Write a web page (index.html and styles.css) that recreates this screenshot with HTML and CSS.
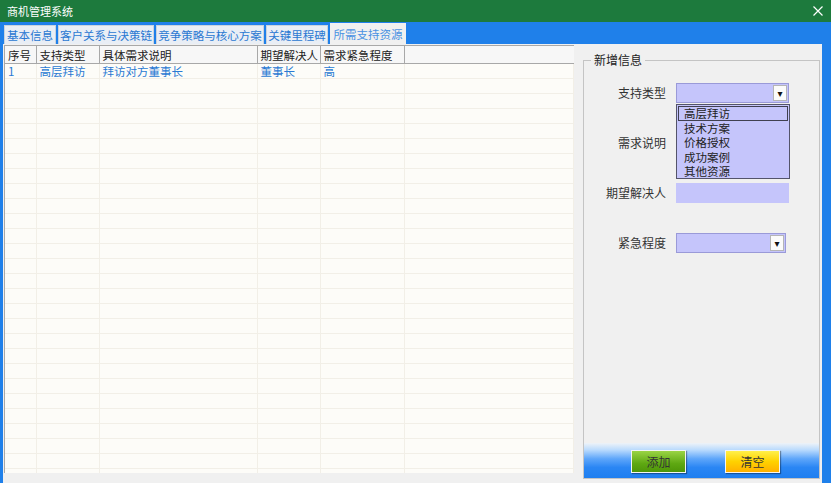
FILE: index.html
```html
<!DOCTYPE html>
<html lang="zh-CN">
<head>
    <meta charset="UTF-8">
    <title>商机管理系统</title>
    <link rel="stylesheet" href="styles.css">
</head>
<body>

    <div class="window">
        <div class="titlebar">
            <span class="title">商机管理系统</span>
            <svg class="close" width="10" height="10" viewBox="0 0 10 10">
                <path d="M0.5 0.5 L9.5 9.5 M9.5 0.5 L0.5 9.5" stroke="white" stroke-width="1.2" fill="none"/>
            </svg>
        </div>

        <div class="frame">
            <div class="tabs">
                <div class="tab w1">基本信息</div>
                <div class="tab w2">客户关系与决策链</div>
                <div class="tab w3">竞争策略与核心方案</div>
                <div class="tab w4">关键里程碑</div>
                <div class="tab w5 active">所需支持资源</div>
            </div>

            <div class="page">
                <div class="grid">
                    <table>
                        <colgroup>
                            <col style="width:31px">
                            <col style="width:63px">
                            <col style="width:158px">
                            <col style="width:63px">
                            <col style="width:84px">
                            <col>
                        </colgroup>
                        <thead>
                            <tr><th>序号</th><th>支持类型</th><th>具体需求说明</th><th>期望解决人</th><th>需求紧急程度</th><th></th></tr>
                        </thead>
                        <tbody>
                            <tr><td>1</td><td>高层拜访</td><td>拜访对方董事长</td><td>董事长</td><td>高</td><td></td></tr>
                            <tr><td></td><td></td><td></td><td></td><td></td><td></td></tr>
                            <tr><td></td><td></td><td></td><td></td><td></td><td></td></tr>
                            <tr><td></td><td></td><td></td><td></td><td></td><td></td></tr>
                            <tr><td></td><td></td><td></td><td></td><td></td><td></td></tr>
                            <tr><td></td><td></td><td></td><td></td><td></td><td></td></tr>
                            <tr><td></td><td></td><td></td><td></td><td></td><td></td></tr>
                            <tr><td></td><td></td><td></td><td></td><td></td><td></td></tr>
                            <tr><td></td><td></td><td></td><td></td><td></td><td></td></tr>
                            <tr><td></td><td></td><td></td><td></td><td></td><td></td></tr>
                            <tr><td></td><td></td><td></td><td></td><td></td><td></td></tr>
                            <tr><td></td><td></td><td></td><td></td><td></td><td></td></tr>
                            <tr><td></td><td></td><td></td><td></td><td></td><td></td></tr>
                            <tr><td></td><td></td><td></td><td></td><td></td><td></td></tr>
                            <tr><td></td><td></td><td></td><td></td><td></td><td></td></tr>
                            <tr><td></td><td></td><td></td><td></td><td></td><td></td></tr>
                            <tr><td></td><td></td><td></td><td></td><td></td><td></td></tr>
                            <tr><td></td><td></td><td></td><td></td><td></td><td></td></tr>
                            <tr><td></td><td></td><td></td><td></td><td></td><td></td></tr>
                            <tr><td></td><td></td><td></td><td></td><td></td><td></td></tr>
                            <tr><td></td><td></td><td></td><td></td><td></td><td></td></tr>
                            <tr><td></td><td></td><td></td><td></td><td></td><td></td></tr>
                            <tr><td></td><td></td><td></td><td></td><td></td><td></td></tr>
                            <tr><td></td><td></td><td></td><td></td><td></td><td></td></tr>
                            <tr><td></td><td></td><td></td><td></td><td></td><td></td></tr>
                            <tr><td></td><td></td><td></td><td></td><td></td><td></td></tr>
                            <tr><td></td><td></td><td></td><td></td><td></td><td></td></tr>
                            <tr><td></td><td></td><td></td><td></td><td></td><td></td></tr>
                        </tbody>
                    </table>
                </div>

                <div class="side">
                    <fieldset class="group">
                        <legend>新增信息</legend>

                        <div class="fields">
                            <label>支持类型</label>
                            <div class="control">
                                <div class="combo"><span class="drop">▾</span></div>
                                <!-- open dropdown list -->
                                <ul class="droplist">
                                    <li class="focused">高层拜访</li>
                                    <li>技术方案</li>
                                    <li>价格授权</li>
                                    <li>成功案例</li>
                                    <li>其他资源</li>
                                </ul>
                            </div>

                            <label>需求说明</label>
                            <div class="control"><div class="textbox"></div></div>

                            <label>期望解决人</label>
                            <div class="control"><div class="textbox"></div></div>

                            <label>紧急程度</label>
                            <div class="control"><div class="combo short"><span class="drop">▾</span></div></div>
                        </div>

                        <div class="actions">
                            <button class="btn add">添加</button>
                            <button class="btn clear">清空</button>
                        </div>
                    </fieldset>
                </div>
            </div>
        </div>
    </div>

</body>
</html>
```

FILE: styles.css
```css
body {
    margin: 0;
    font-family: "Noto Sans CJK SC", "Microsoft YaHei", sans-serif;
    font-size: 12px;
    color: #222;
    background-color: #1f80ea;
}

.window {
    width: 831px;
    height: 483px;
    display: flex;
    flex-direction: column;
    overflow: hidden;
}

.titlebar {
    height: 22px;
    background-color: #1d7a3d;
    color: white;
    display: flex;
    align-items: center;
    justify-content: space-between;
    padding: 0 8px 0 7px;
    font-size: 11px;
}

.titlebar .close {
    display: block;
}

.frame {
    flex: 1;
    display: flex;
    flex-direction: column;
    background-color: #1f80ea;
    padding: 0 9px 0 3px;
}

.tabs {
    height: 22px;
    display: flex;
    align-items: flex-end;
    gap: 2px;
    padding-left: 1px;
}

.tab {
    height: 19px;
    line-height: 19px;
    text-align: center;
    font-size: 11.5px;
    color: #2a78d2;
    background-color: #e9eef5;
    border: 1px solid #c9d3de;
    border-bottom: none;
    box-sizing: border-box;
    white-space: nowrap;
}

.tab.w1 { width: 52px; }
.tab.w2 { width: 96px; }
.tab.w3 { width: 108px; }
.tab.w4 { width: 62px; }
.tab.w5 { width: 76px; }

.tab.active {
    height: 21px;
    line-height: 20px;
    background-color: #f0f0f0;
    color: #4a92e2;
    border-color: #f0f0f0;
}

.page {
    flex: 1;
    display: flex;
    background-color: #f0f0f0;
}

/* data grid */
.grid {
    width: 570px;
    height: 428px;
    margin: 1px 0 0 1px;
    background-color: #fdfcf8;
    border-top: 1px solid #a8a8a8;
    border-left: 1px solid #a8a8a8;
    box-sizing: border-box;
    overflow: hidden;
}

.grid table {
    width: 100%;
    border-collapse: collapse;
    table-layout: fixed;
}

.grid th {
    height: 17px;
    padding: 0 3px;
    text-align: left;
    font-size: 11.5px;
    font-weight: normal;
    color: #222;
    background-color: #f7f7f7;
    border-right: 1px solid #a8a8a8;
    border-bottom: 1px solid #a8a8a8;
    white-space: nowrap;
    overflow: hidden;
}

.grid th:last-child {
    border-right: none;
}

.grid td {
    height: 14px;
    padding: 0 3px;
    font-size: 11.5px;
    color: #2a7ad3;
    border-right: 1px solid #f2efe7;
    border-bottom: 1px solid #f2efe7;
    white-space: nowrap;
    overflow: hidden;
    line-height: 14px;
}

/* right panel */
.side {
    padding: 8px 0 4px 9px;
    display: flex;
}

.group {
    width: 237px;
    margin: 0;
    padding: 0;
    border: 1px solid #c4c4c4;
    box-sizing: border-box;
    display: flex;
    flex-direction: column;
}

.group legend {
    margin-left: 7px;
    padding: 0 3px;
    line-height: 16px;
    color: #222;
}

.fields {
    display: grid;
    grid-template-columns: 82px 114px;
    grid-auto-rows: 20px;
    column-gap: 10px;
    row-gap: 30px;
    padding-top: 15px;
}

.fields label {
    text-align: right;
    line-height: 20px;
    color: #333;
}

.control {
    position: relative;
}

.combo,
.textbox {
    height: 20px;
    width: 113px;
    background-color: #c5c5fb;
    box-sizing: border-box;
}

.combo {
    position: relative;
    border: 1px solid #9a9ad8;
}

.combo.short {
    width: 110px;
}

.combo .drop {
    position: absolute;
    right: 1px;
    top: 1px;
    width: 14px;
    height: 16px;
    line-height: 16px;
    text-align: center;
    font-family: "DejaVu Sans", sans-serif;
    font-size: 10px;
    color: #111;
    background-color: #fbfbfb;
    border: 1px solid #b5b5b5;
    box-sizing: border-box;
}

.droplist {
    position: absolute;
    top: 21px;
    left: 0;
    width: 114px;
    height: 75px;
    margin: 0;
    padding: 1px 1px 0;
    list-style: none;
    background-color: #c5c5fb;
    border: 1px solid #54546a;
    box-sizing: border-box;
    z-index: 2;
}

.droplist li {
    height: 14.5px;
    line-height: 14.5px;
    font-size: 11.5px;
    padding-left: 6px;
    color: #222;
    overflow: hidden;
}

.droplist li.focused {
    outline: 1px solid #404050;
    outline-offset: -1px;
}

.actions {
    margin-top: auto;
    height: 35px;
    display: flex;
    align-items: flex-start;
    gap: 39px;
    padding: 7px 0 0 47px;
    box-sizing: border-box;
    background: linear-gradient(to bottom, #eef3f8 0%, #b9dafd 20%, #5ea6fa 45%, #2a86f4 70%, #1f7ff0 100%);
}

.btn {
    width: 55px;
    height: 23px;
    padding: 0;
    font-family: "Noto Sans CJK SC", sans-serif;
    font-size: 12px;
    color: #333;
    border: 1px solid #f4f4f4;
    box-shadow: 1px 1px 1px rgba(0, 0, 0, 0.35);
    cursor: pointer;
}

.btn.add {
    background: linear-gradient(to bottom, #9ad444, #5ea812 60%, #4e9608);
}

.btn.clear {
    background: linear-gradient(to bottom, #fff04a, #ffd200 50%, #ffb000);
}
```
